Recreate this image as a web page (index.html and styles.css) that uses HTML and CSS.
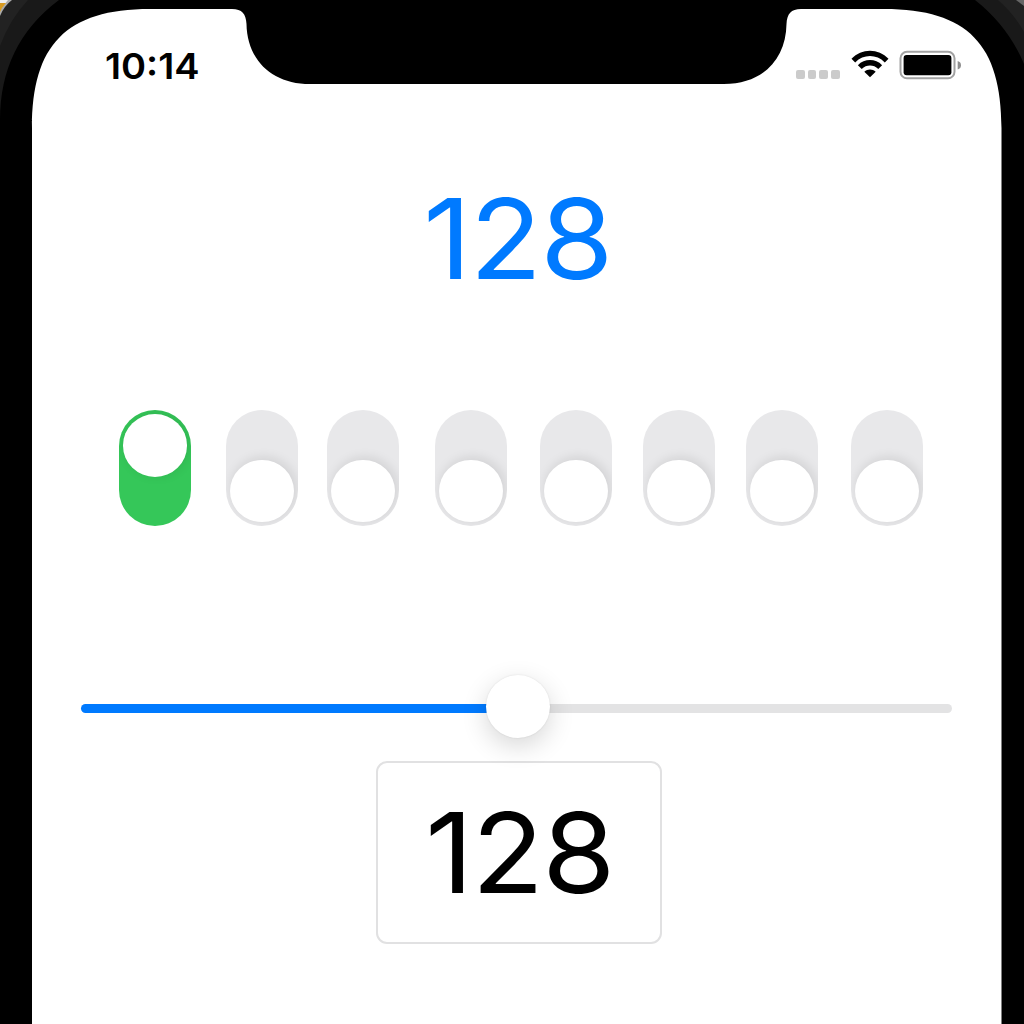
FILE: index.html
```html
<!DOCTYPE html>
<html lang="en">
<head>
<meta charset="utf-8">
<title>Binary switches</title>
<link rel="stylesheet" href="styles.css">
</head>
<body>
<svg class="frame" viewBox="0 0 1024 1024" aria-hidden="true">
  <rect width="1024" height="1024" fill="#000"/>
  <path d="M0 0H59Q0 44 0 120Z" fill="#191919"/>
  <path d="M0 0H28Q10 19 0 46Z" fill="#222"/>
  <path d="M0 0H12Q4 6 0 16Z" fill="#aaa"/>
  <path d="M0 0H8L0 10Z" fill="#eee"/>
  <path d="M0 3H6L2 8L0 12Z" fill="#d79a20"/>
  <path d="M975 0H1024V64Q1008 26 975 0Z" fill="#191919"/>
  <path d="M998 0H1024V32Q1014 14 998 0Z" fill="#222"/>
  <path d="M1016 0H1024V6Z" fill="#666"/>
  <path fill="#fff" d="M32 1024V128C32 45 66 9 150 9H232C242 9 246 14 246.500 24C247 59 271 84 310 84H724C763 84 786 59 786.500 24C787 14 791 9 801 9H884C968 9 1001.500 45 1001.500 128V1024Z"/>
</svg>
<main class="screen">
  <header class="status">
    <span class="time">10:14</span>
    <span class="signal"><i></i><i></i><i></i><i></i></span>
    <svg class="wifi" viewBox="0 0 38 28" aria-hidden="true">
      <path d="M0.500 8.800C10.500-1.900 27.500-1.900 37.500 8.800L33.800 12.400C25.500 3.900 12.500 3.900 4.200 12.400Z"/>
      <path d="M6.900 15.200C13.500 8.400 24.500 8.400 31.100 15.200L27.300 18.900C22.500 14.300 15.500 14.300 10.700 18.900Z"/>
      <path d="M13.300 21.800C16.500 18.700 21.500 18.700 24.700 21.800L19 27.300Z"/>
    </svg>
    <svg class="battery" viewBox="0 0 64 30" aria-hidden="true">
      <rect x="1.500" y="1.800" width="54" height="26.500" rx="6.500" fill="none" stroke="#a2a2a2" stroke-width="2"/>
      <rect x="4.600" y="5" width="47.800" height="20.300" rx="3"/>
      <path d="M58.700 11Q62 12 62 15.300Q62 18.500 58.700 19.500Z" fill="#8e8e8e"/>
    </svg>
  </header>
  <div class="number result"><span>128</span></div>
  <div class="switches">
    <span class="switch on"></span><span class="switch"></span><span class="switch"></span><span class="switch"></span><span class="switch"></span><span class="switch"></span><span class="switch"></span><span class="switch"></span>
  </div>
  <div class="slider"><span class="fill"></span><span class="thumb"></span><span class="rest"></span></div>
  <div class="number field"><span>128</span></div>
</main>
</body>
</html>
```
FILE: styles.css
```css
* { box-sizing: border-box; }
body {
  margin: 0;
  width: 1024px;
  height: 1024px;
  overflow: hidden;
  background: #000;
  font-family: Inter, "Liberation Sans", sans-serif;
}
.frame { position: absolute; inset: 0; width: 1024px; height: 1024px; }
.screen {
  position: relative;
  display: flex;
  flex-direction: column;
  width: 970px;
  height: 1024px;
  margin-left: 32px;
}
.status {
  display: flex;
  height: 84px;
  padding: 50px 39px 0 73px;
}
.time {
  width: 200px;
  font-size: 36px;
  font-weight: 600;
  line-height: 32px;
  transform: scaleX(1.055);
  transform-origin: left;
}
.signal { display: flex; gap: 3px; margin: 20px 11px 0 auto; }
.signal i { width: 8.8px; height: 8.5px; border-radius: 2px; background: #cbcbcb; }
.wifi { width: 38px; height: 28px; margin-right: 10px; }
.battery { width: 64px; height: 30px; }
.number { font-size: 111px; line-height: 112px; text-align: center; }
.number span { display: inline-block; letter-spacing: -1.5px; transform: translateX(1px) scaleX(1.065); }
.result { height: 112px; margin-top: 99px; color: #007aff; }
.field {
  width: 286px;
  height: 183px;
  margin: 22.5px 0 0 344px;
  padding-top: 34px;
  border: 2px solid #e1e1e2;
  border-radius: 11px;
  color: #000;
}
.switches {
  display: grid;
  grid-template-columns: 107.3px 101px 108px 105px 103px 103px 105px 72px;
  height: 116px;
  margin: 115.4px 0 0 87px;
}
.switch {
  display: flex;
  align-items: flex-end;
  width: 72px;
  height: 116px;
  padding: 4px;
  border-radius: 36px;
  background: #e8e8ea;
  overflow: hidden;
}
.switch::before {
  content: "";
  width: 64px;
  height: 62.5px;
  border-radius: 50%;
  background: #fff;
  box-shadow: 2px -2px 12px rgba(0, 0, 0, .11);
}
.switch.on { align-items: flex-start; background: #35c759; }
.slider {
  display: flex;
  align-items: center;
  height: 64px;
  margin: 148px 50px 0 49px;
}
.fill { width: 406px; height: 9px; margin-top: 5px; border-radius: 5px 0 0 5px; background: #007aff; }
.thumb {
  z-index: 1;
  width: 64px;
  height: 63px;
  margin: 0 -1px;
  border-radius: 50%;
  background: #fff;
  box-shadow: 0 8px 26px rgba(0, 0, 0, .16), 0 0 2px rgba(0, 0, 0, .1);
}
.rest { flex: 1; height: 9px; margin-top: 5px; border-radius: 0 5px 5px 0; background: #e3e3e4; }
```
